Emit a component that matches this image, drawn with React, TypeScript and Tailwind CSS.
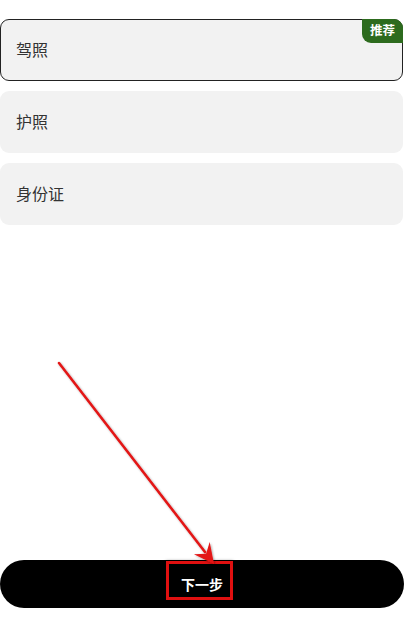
import React from 'react';

const OPTIONS = [
  { label: '驾照', recommended: true },
  { label: '护照', recommended: false },
  { label: '身份证', recommended: false },
];

export default function App() {
  return (
    <div
      className="relative flex h-[618px] w-[404px] flex-col bg-white"
      style={{ fontFamily: '"Noto Sans", "Noto Sans CJK SC", sans-serif' }}
    >
      {/* 证件选项 */}
      <div className="flex flex-col gap-[10px] pt-[19px] pr-px">
        {OPTIONS.map((opt) => (
          <div
            key={opt.label}
            className={
              opt.recommended
                ? 'relative flex h-[62px] items-center rounded-[9px] border border-[#222] bg-[#f2f2f2] px-[15px]'
                : 'relative flex h-[62px] items-center rounded-[9px] bg-[#f2f2f2] px-4'
            }
          >
            <span className="text-[16px] text-[#333]">{opt.label}</span>
            {opt.recommended && (
              <span className="absolute right-[-1px] top-[-1px] flex h-[24px] items-center rounded-bl-[9px] rounded-tr-[9px] bg-[#2d6b1e] px-[8px] text-[12.5px] font-bold text-white">
                推荐
              </span>
            )}
          </div>
        ))}
      </div>

      <div className="flex-1" />

      {/* 底部按钮 */}
      <div className="pb-[10px]">
        <button className="flex h-[48px] w-full items-center justify-center rounded-full bg-black text-[14px] font-bold text-white">
          下一步
        </button>
      </div>

      {/* 标注：红框 + 箭头 */}
      <div className="pointer-events-none absolute left-[166px] top-[561px] h-[39px] w-[67px] border-[3px] border-[#e01010] shadow-[0_0_3px_rgba(0,0,0,0.5)]" />
      <svg
        className="pointer-events-none absolute left-0 top-0"
        width="404"
        height="618"
        viewBox="0 0 404 618"
      >
        <defs>
          <filter id="sh" x="-20%" y="-20%" width="140%" height="140%">
            <feDropShadow dx="1" dy="1" stdDeviation="1.2" floodColor="#000" floodOpacity="0.35" />
          </filter>
        </defs>
        <g filter="url(#sh)">
          <line x1="59" y1="363" x2="205" y2="552" stroke="#e31414" strokeWidth="2.5" strokeLinecap="round" />
          <polygon points="214,564 193.9,554.2 206.1,553.7 209.7,542" fill="#e31414" />
        </g>
      </svg>
    </div>
  );
}
